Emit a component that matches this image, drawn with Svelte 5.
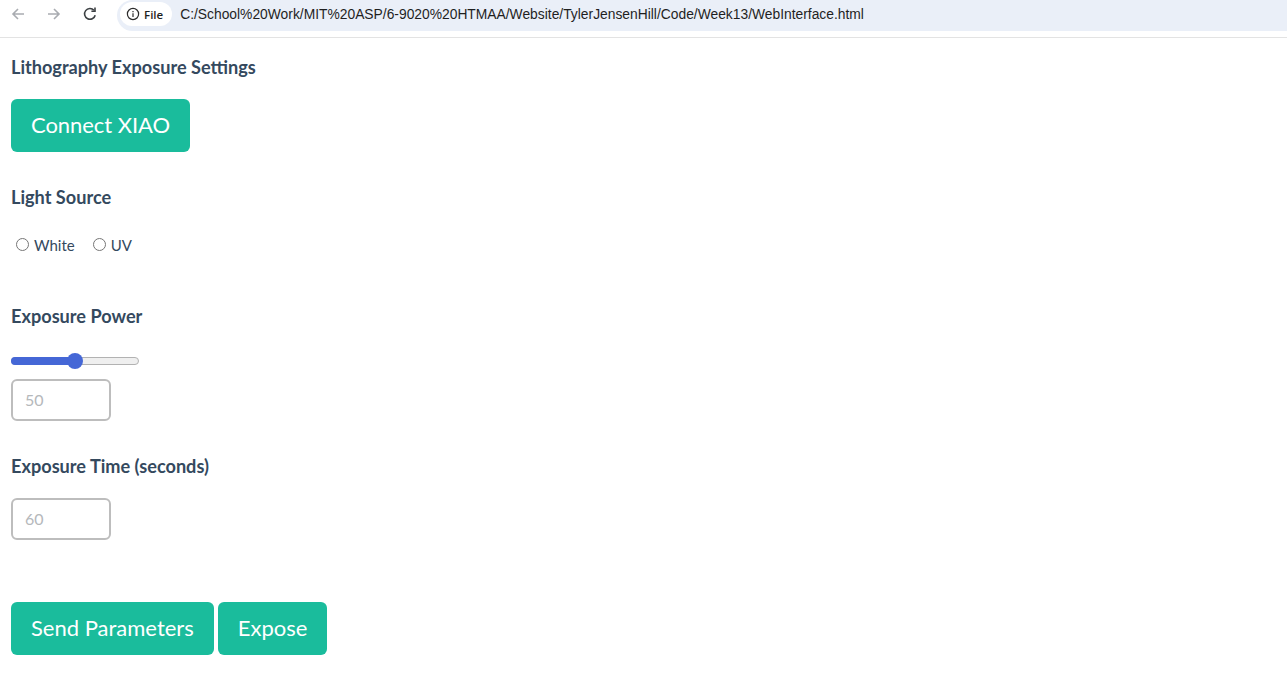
<script>
  let power = $state(50);
</script>

<div class="toolbar">
  <div class="nav">
    <svg width="16" height="16" viewBox="0 0 16 16" class="dim"><path d="M14 8H3M8 3 3 8l5 5" /></svg>
    <svg width="16" height="16" viewBox="0 0 16 16" class="dim"><path d="M2 8h11M8 3l5 5-5 5" /></svg>
    <svg width="16" height="16" viewBox="0 0 16 16" class="dark"><path d="M13.2 9.2A5.4 5.4 0 1 1 12 4.3" /><path d="M13 1.6v3.6H9.4" /></svg>
  </div>
  <div class="address">
    <div class="chip">
      <svg width="14" height="14" viewBox="0 0 14 14" class="info"><circle cx="7" cy="7" r="5.6" /><path d="M7 6.3v3.6M7 4v1.2" /></svg>
      <span>File</span>
    </div>
    <span class="url">C:/School%20Work/MIT%20ASP/6-9020%20HTMAA/Website/TylerJensenHill/Code/Week13/WebInterface.html</span>
  </div>
</div>

<main>
  <h3 class="title">Lithography Exposure Settings</h3>
  <button class="btn connect">Connect XIAO</button>

  <h3 class="source">Light Source</h3>
  <div class="radios">
    <label><input type="radio" name="light" /> <span>White</span></label>
    <label><input type="radio" name="light" /> <span>UV</span></label>
  </div>

  <h3 class="power">Exposure Power</h3>
  <div class="slider"><div class="fill"></div><div class="thumb"></div></div>
  <input class="num" type="number" placeholder={String(power)} />

  <h3 class="time">Exposure Time (seconds)</h3>
  <input class="num" type="number" placeholder="60" />

  <div class="actions">
    <button class="btn">Send Parameters</button>
    <button class="btn">Expose</button>
  </div>
</main>

<style>
  :global(body) {
    margin: 0;
    background: #fff;
    font-family: Lato, "Liberation Sans", sans-serif;
    color: #34495e;
  }

  .toolbar {
    display: flex;
    align-items: flex-start;
    height: 37px;
    border-bottom: 1px solid #e3e3e3;
    padding-left: 10px;
  }

  .nav {
    display: flex;
    gap: 20px;
    margin-top: 6px;
    margin-right: 19px;
  }

  .nav svg {
    fill: none;
    stroke-width: 1.6;
  }

  .dim { stroke: #a9acb1; }
  .dark { stroke: #3c4043; }

  .address {
    display: flex;
    align-items: center;
    flex: 1;
    height: 31px;
    background: #eaeff8;
    border-radius: 16px 0 0 16px;
    font-family: "Liberation Sans", sans-serif;
    font-size: 13.83px;
    color: #1f1f1f;
  }

  .chip {
    display: flex;
    align-items: center;
    gap: 4px;
    height: 24px;
    padding: 0 9px 0 6px;
    margin-left: 3px;
    margin-right: 8px;
    margin-top: -3px;
    background: #fff;
    border-radius: 12px;
    font-family: "Open Sans", sans-serif;
    font-size: 11.5px;
    font-weight: 600;
  }

  .url {
    margin-top: -3px;
  }

  .info {
    fill: none;
    stroke: #2b2b2b;
    stroke-width: 1.2;
  }

  main {
    padding: 0 11px;
  }

  h3 {
    margin: 0;
    padding-bottom: 2px;
    font-size: 18.15px;
    line-height: 18px;
    font-weight: 700;
    color: #34495e;
  }

  .title { padding-top: 20px; }
  .source { margin-top: 36px; }
  .power { margin-top: 53px; }
  .time { margin-top: 36px; }

  .btn {
    display: inline-block;
    height: 53px;
    padding: 0 20px 2px;
    margin: 0;
    border: none;
    border-radius: 6px;
    background: #1abc9c;
    color: #fff;
    font-family: inherit;
    font-size: 22px;
  }

  .connect {
    letter-spacing: -0.05px;
  }

  .title + .btn { margin-top: 21px; }

  .radios {
    display: flex;
    gap: 18px;
    margin-top: 26px;
    padding-left: 5px;
    height: 20px;
    align-items: center;
    font-size: 15px;
    color: #34495e;
  }

  .radios label {
    display: flex;
    align-items: center;
    gap: 5px;
  }

  .radios span {
    padding-top: 2px;
  }

  .radios input {
    margin: 0;
    width: 13px;
    height: 13px;
  }

  .slider {
    position: relative;
    width: 128px;
    height: 8px;
    background: #efefef;
    border: 1px solid #b2b2b2;
    border-radius: 5px;
    box-sizing: border-box;
  }

  .fill {
    position: absolute;
    left: -1px;
    top: -1px;
    width: 63px;
    height: 8px;
    background: #4567d6;
    border-radius: 5px 0 0 5px;
  }

  .thumb {
    position: absolute;
    left: 55px;
    top: -5px;
    width: 16px;
    height: 16px;
    background: #4567d6;
    border-radius: 50%;
  }

  .num {
    display: block;
    box-sizing: border-box;
    width: 100px;
    height: 42px;
    padding: 0 12px 1px;
    border: 2px solid #bdbdbd;
    border-radius: 6px;
    background: #fff;
    font-family: inherit;
    font-size: 16px;
    -moz-appearance: textfield;
    appearance: textfield;
  }

  .num::placeholder { color: #b5b8bb; }

  .power + .slider { margin-top: 30px; }
  .slider + .num { margin-top: 14px; }
  .time + .num { margin-top: 21px; }

  .actions {
    display: flex;
    gap: 4px;
    margin-top: 62px;
  }
</style>
